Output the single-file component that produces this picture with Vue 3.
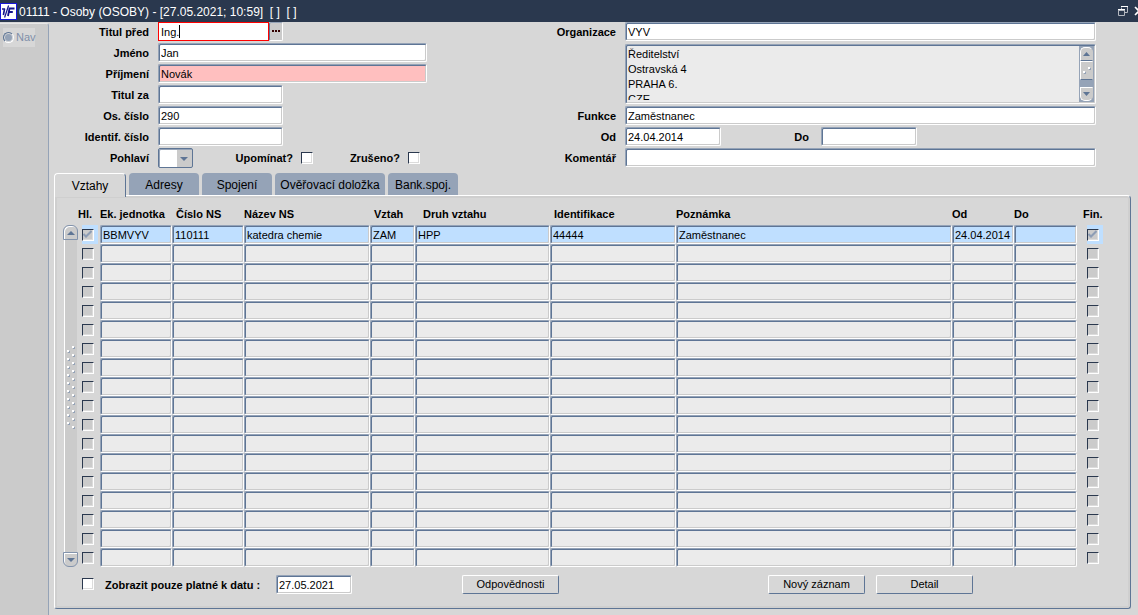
<script setup>
import { ref } from 'vue'

const tabs = ['Vztahy', 'Adresy', 'Spojení', 'Ověřovací doložka', 'Bank.spoj.']
const activeTab = ref(0)

const columns = [
  { key: 'unit', label: 'Ek. jednotka', pad: '' },
  { key: 'nsNumber', label: 'Číslo NS', pad: 'pad-s' },
  { key: 'nsName', label: 'Název NS', pad: '' },
  { key: 'relation', label: 'Vztah', pad: 'pad-s' },
  { key: 'kind', label: 'Druh vztahu', pad: 'pad-m' },
  { key: 'ident', label: 'Identifikace', pad: 'pad-s' },
  { key: 'note', label: 'Poznámka', pad: '' },
  { key: 'from', label: 'Od', pad: '' },
  { key: 'to', label: 'Do', pad: '' },
]

const rows = Array.from({ length: 18 }, () => ({}))
rows[0] = {
  unit: 'BBMVYV',
  nsNumber: '110111',
  nsName: 'katedra chemie',
  relation: 'ZAM',
  kind: 'HPP',
  ident: '44444',
  note: 'Zaměstnanec',
  from: '24.04.2014',
  to: '',
}

const address = 'Ředitelství\nOstravská 4\nPRAHA 6.\nCZE'
const gripDots = Array.from({ length: 21 }, (_, i) => ({ x: i % 2 ? 0 : 5, y: i * 4 }))
</script>

<template>
  <div class="window">
    <header class="titlebar">
      <svg class="logo" width="17" height="17" viewBox="0 0 17 17" aria-hidden="true">
        <rect x="0.5" y="0.5" width="16" height="16" fill="#fff" stroke="#1616d8" />
        <g fill="none" stroke="#14148c">
          <path d="M2 6H5M4.6 5.5L3.4 12" stroke-width="1.6" />
          <path d="M8.6 2.5L4.6 14.5" stroke-width="1.2" />
          <path d="M8.6 5.5H14.5M9.6 5L8 13M8.8 9H12.8" stroke-width="1.8" />
        </g>
      </svg>
      <h1>01111 - Osoby (OSOBY) - [27.05.2021; 10:59]&nbsp; [ ]&nbsp; [ ]</h1>
      <div class="window-buttons">
        <button type="button" aria-label="Obnovit">
          <svg width="10" height="10" viewBox="0 0 10 10">
            <path d="M3.5 3V1.5M9.5 1V6.5H7M0.5 4V9.5H6.5V4" fill="none" stroke="#b4b8c0" />
            <path d="M3 0.5H10M0 3.5H7" fill="none" stroke="#fff" />
            <path d="M0 4.5H7" fill="none" stroke="#b4b8c0" />
          </svg>
        </button>
        <button type="button" aria-label="Zavřít">
          <svg width="10" height="10" viewBox="0 0 10 10">
            <path d="M1 1L9 9M9 1L1 9" stroke="#fff" stroke-width="1.6" />
          </svg>
        </button>
      </div>
    </header>

    <div class="body">
      <aside class="sidebar">
        <label class="nav"><input type="radio" disabled checked />Nav</label>
      </aside>

      <main>
        <form class="form" @submit.prevent>
          <div class="person">
            <div class="row">
              <label for="before">Titul před</label>
              <div class="focused">
                <input id="before" type="text" value="Ing." class="w-title" />
                <span class="caret"></span>
              </div>
              <button type="button" class="lookup" aria-label="Výběr hodnoty">
                <svg width="8" height="2" viewBox="0 0 8 2"><path d="M0 0h2v2H0zM3 0h2v2H3zM6 0h2v2H6z" fill="#300" /></svg>
              </button>
            </div>
            <div class="row">
              <label for="first">Jméno</label>
              <input id="first" type="text" value="Jan" class="field w-long" />
            </div>
            <div class="row">
              <label for="last">Příjmení</label>
              <input id="last" type="text" value="Novák" class="field w-long required" />
            </div>
            <div class="row">
              <label for="after">Titul za</label>
              <input id="after" type="text" class="field w-mid" />
            </div>
            <div class="row">
              <label for="number">Os. číslo</label>
              <input id="number" type="text" value="290" class="field w-mid" />
            </div>
            <div class="row">
              <label for="ident">Identif. číslo</label>
              <input id="ident" type="text" class="field w-mid" />
            </div>
            <div class="row">
              <label for="sex">Pohlaví</label>
              <div class="select">
                <select id="sex"><option value=""></option></select>
                <svg width="8" height="4" viewBox="0 0 8 4"><path d="M0 0h8L4 4z" fill="#5e7595" /></svg>
              </div>
              <label for="remind" class="check-label">Upomínat?</label>
              <input id="remind" type="checkbox" class="check" />
              <label for="cancelled" class="check-label">Zrušeno?</label>
              <input id="cancelled" type="checkbox" class="check" />
            </div>
          </div>

          <div class="organisation">
            <div class="row">
              <label for="org">Organizace</label>
              <input id="org" type="text" value="VYV" class="field grow" />
            </div>
            <div class="row address-row">
              <div class="address">
                <textarea aria-label="Adresa organizace" readonly :value="address"></textarea>
                <div class="mini-scroll">
                  <button type="button" class="mini-up" aria-label="Nahoru">
                    <svg width="7" height="4" viewBox="0 0 7 4"><path d="M0 4L3.5 0L7 4z" fill="#5e7595" /></svg>
                  </button>
                  <div class="mini-thumb">
                    <svg width="8" height="7" viewBox="0 0 8 7">
                      <path d="M5 0h2v2H5zM0 4h2v2H0z" fill="#fff" />
                      <path d="M7 1h1v2H6V2h1zM2 5h1v2H1V6h1z" fill="#95a3b7" />
                    </svg>
                  </div>
                  <button type="button" class="mini-down" aria-label="Dolů">
                    <svg width="7" height="4" viewBox="0 0 7 4"><path d="M0 0h7L3.5 4z" fill="#5e7595" /></svg>
                  </button>
                </div>
              </div>
            </div>
            <div class="row">
              <label for="role">Funkce</label>
              <input id="role" type="text" value="Zaměstnanec" class="field grow" />
            </div>
            <div class="row">
              <label for="from">Od</label>
              <input id="from" type="text" value="24.04.2014" class="field w-date" />
              <label for="to" class="to-label">Do</label>
              <input id="to" type="text" class="field w-date" />
            </div>
            <div class="row">
              <label for="comment">Komentář</label>
              <input id="comment" type="text" class="field grow" />
            </div>
          </div>
        </form>

        <nav class="tabs" role="tablist">
          <button
            v-for="(tab, i) in tabs"
            :key="tab"
            type="button"
            role="tab"
            :class="{ active: i === activeTab, wide: i === 3 }"
            :aria-selected="i === activeTab"
            @click="activeTab = i"
          >{{ tab }}</button>
        </nav>

        <section class="panel">
          <div class="records">
            <div class="scrollbar">
              <button type="button" class="up" aria-label="Předchozí">
                <svg width="8" height="4" viewBox="0 0 8 4"><path d="M0 4L4 0L8 4z" fill="#5e7595" /></svg>
              </button>
              <div class="track">
                <svg width="8" height="84" viewBox="0 0 8 84">
                  <g v-for="dot in gripDots" :key="dot.y">
                    <path :d="`M${dot.x + 1} ${dot.y + 2}h1v-1h1v2h-2z`" fill="#95a3b7" />
                    <rect :x="dot.x" :y="dot.y" width="2" height="2" fill="#fff" />
                  </g>
                </svg>
              </div>
              <button type="button" class="down" aria-label="Další">
                <svg width="8" height="4" viewBox="0 0 8 4"><path d="M0 0h8L4 4z" fill="#5e7595" /></svg>
              </button>
            </div>

            <table>
              <colgroup>
                <col class="c-main" />
                <col v-for="col in columns" :key="col.key" :class="'c-' + col.key" />
                <col class="c-fin" />
              </colgroup>
              <thead>
                <tr>
                  <th class="th-main"><span>Hl.</span></th>
                  <th v-for="col in columns" :key="col.key" :class="col.pad">{{ col.label }}</th>
                  <th class="th-fin">Fin.</th>
                </tr>
              </thead>
              <tbody>
                <tr v-for="(row, i) in rows" :key="i" :class="{ current: i === 0 }">
                  <td>
                    <span class="mark">
                      <input type="checkbox" class="check" disabled :checked="i === 0" aria-label="Hl." />
                      <svg v-if="i === 0" width="9" height="8" viewBox="0 0 9 8"><path d="M0.5 4L3 6.5L8.5 1" fill="none" stroke="#8d9db5" stroke-width="2" /></svg>
                    </span>
                  </td>
                  <td v-for="col in columns" :key="col.key">
                    <input type="text" class="field" :value="row[col.key]" :aria-label="col.label" />
                  </td>
                  <td class="td-fin">
                    <span class="mark">
                      <input type="checkbox" class="check" disabled :checked="i === 0" aria-label="Fin." />
                      <svg v-if="i === 0" width="9" height="8" viewBox="0 0 9 8"><path d="M0.5 4L3 6.5L8.5 1" fill="none" stroke="#8d9db5" stroke-width="2" /></svg>
                    </span>
                  </td>
                </tr>
              </tbody>
            </table>
          </div>

          <footer>
            <input id="valid" type="checkbox" class="check" />
            <label for="valid">Zobrazit pouze platné k datu :</label>
            <input type="text" value="27.05.2021" class="field w-day" aria-label="Datum platnosti" />
            <button type="button" class="action answers">Odpovědnosti</button>
            <div class="right-actions">
              <button type="button" class="action">Nový záznam</button>
              <button type="button" class="action">Detail</button>
            </div>
          </footer>
        </section>
      </main>
    </div>
  </div>
</template>

<style>
body {
  background: #d7d7d7;
}
</style>

<style scoped>
.window {
  display: flex;
  flex-direction: column;
  min-height: 100vh;
  overflow: hidden;
  background: #d7d7d7;
  color: #000;
  font: 11px/15px "Liberation Sans", Arial, sans-serif;
}
.window *,
.window *::before {
  box-sizing: border-box;
}
button,
input,
select,
textarea {
  margin: 0;
  padding: 0;
  border: 0;
  border-radius: 0;
  outline: none;
  font: inherit;
  color: inherit;
}
button {
  display: flex;
  align-items: center;
  justify-content: center;
  background: none;
}
svg {
  display: block;
  flex: none;
}

.titlebar {
  display: flex;
  align-items: center;
  height: 22px;
  background: #2a384e;
  color: #fff;
}
.titlebar h1 {
  margin: 0 0 0 2px;
  padding-top: 2px;
  font-size: 12px;
  font-weight: normal;
  white-space: nowrap;
}
.window-buttons {
  display: flex;
  gap: 6px;
  margin-left: auto;
  margin-right: -6px;
}

.body {
  display: flex;
  flex: 1;
}
.sidebar {
  flex: none;
  width: 49px;
  margin-top: 1px;
  padding: 4px 0 0 3px;
  background: #cbcbcb;
  border-right: 1px solid #95a3b7;
  border-top: 1px solid #e8e8e8;
  border-radius: 0 3px 0 0;
}
.nav {
  display: flex;
  align-items: center;
  gap: 2px;
  width: 32px;
  height: 19px;
  background: #d7d7d7;
  color: #7f90aa;
}
.nav input {
  appearance: none;
  flex: none;
  width: 11px;
  height: 11px;
  border: 1px solid #5e7595;
  border-right-color: #fff;
  border-bottom-color: #fff;
  border-radius: 50%;
  background: #95a3b7;
  box-shadow: inset 0 0 0 1px #d7d7d7;
}

main {
  flex: 1;
  min-width: 0;
}
.form {
  display: flex;
}
.person,
.organisation {
  display: flex;
  flex-direction: column;
  gap: 2px;
}
.person {
  flex: none;
  width: 458px;
}
.organisation {
  flex: 1;
  padding-right: 42px;
}
.row {
  display: flex;
  align-items: center;
  height: 19px;
}
label {
  font-weight: bold;
  white-space: nowrap;
}
.row label {
  padding-top: 2px;
}
.nav {
  font-weight: normal;
}
.row > label:first-child {
  flex: none;
  width: 109px;
  padding-right: 9px;
  text-align: right;
}
.organisation .row > label:first-child {
  width: 118px;
}

.field {
  display: block;
  width: 100%;
  height: 19px;
  padding: 1px 2px 0;
  border: 1px solid;
  border-color: #95a3b7 #fff #fff #95a3b7;
  border-radius: 2px;
  background: #fff;
  box-shadow: inset 1px 1px #5e7595, inset -1px -1px #cbcbcb;
}
.w-long {
  width: 269px;
}
.w-mid {
  width: 125px;
}
.w-date {
  width: 96px;
}
.w-day {
  width: 76px;
}
.grow {
  flex: 1;
}
.required {
  background: #ffbfbf;
}

.focused {
  position: relative;
  height: 19px;
}
.w-title {
  display: block;
  width: 111px;
  height: 19px;
  padding: 1px 2px 0;
  border: 1px solid #f00;
  background: #fff;
}
.caret {
  position: absolute;
  top: 3px;
  left: 21px;
  width: 1px;
  height: 13px;
  background: #000;
}
.lookup {
  width: 14px;
  height: 19px;
  padding-bottom: 2px;
  background: #cbcbcb;
  border: 1px solid;
  border-color: #95a3b7 #fff #fff #5e7595;
  border-radius: 2px;
}

.select {
  position: relative;
  width: 35px;
  height: 20px;
}
.select select {
  appearance: none;
  display: block;
  width: 35px;
  height: 20px;
  border: 1px solid #5e7595;
  border-radius: 2px;
  background: linear-gradient(90deg, #fff 18px, #cbcbcb 18px);
  box-shadow: inset 1px 1px #95a3b7;
}
.select svg {
  position: absolute;
  top: 9px;
  right: 5px;
  pointer-events: none;
}

.check {
  appearance: none;
  display: block;
  flex: none;
  width: 12px;
  height: 12px;
  border: 1px solid;
  border-color: #2a384e #fff #fff #2a384e;
  background: #fff;
  box-shadow: inset -1px -1px #dcdcdc;
}
.check:disabled {
  background: #cbcbcb;
}
.check-label {
  width: 100px;
  margin-right: 8px;
  text-align: right;
}
.check + .check-label {
  width: 87px;
}

.address-row {
  height: 61px;
  padding-left: 118px;
}
.address {
  display: flex;
  width: 100%;
  height: 60px;
  padding: 1px;
  border: 1px solid;
  border-color: #95a3b7 #fff #fff #95a3b7;
  border-radius: 2px;
  background: #ebebeb;
  box-shadow: inset 1px 1px #5e7595, inset -1px -1px #cbcbcb;
}
.address textarea {
  flex: 1;
  padding: 1px;
  margin-bottom: 2px;
  background: none;
  resize: none;
  overflow: hidden;
}
.mini-scroll {
  display: flex;
  flex-direction: column;
  width: 15px;
  padding: 1px;
  background: #95a3b7;
}
.mini-up,
.mini-down,
.mini-thumb {
  display: flex;
  align-items: center;
  justify-content: center;
  width: 13px;
  background: #cbcbcb;
  border: 1px solid;
  border-color: #fff #cbcbcb #5e7595 #fff;
}
.mini-up {
  height: 14px;
  border-radius: 5px 5px 0 0;
}
.mini-thumb {
  height: 19px;
}
.mini-down {
  height: 14px;
  margin-top: auto;
  border-bottom-color: #fff;
  border-radius: 0 0 5px 5px;
}
.organisation .w-date {
  flex: none;
}
.to-label {
  width: 88px;
  margin-right: 12px;
  text-align: right;
}

.tabs {
  display: flex;
  gap: 3px;
  margin: 6px 0 0 5px;
}
.tabs button {
  width: 70px;
  height: 22px;
  padding-top: 2px;
  border-radius: 4px 4px 0 0;
  background: #95a3b7;
  font-size: 12px;
  white-space: nowrap;
}
.tabs .wide {
  width: 110px;
}
.tabs .active {
  position: relative;
  z-index: 1;
  width: 72px;
  height: 24px;
  margin-bottom: -2px;
  border: 1px solid;
  border-color: #fff #5e7595 transparent #fff;
  border-bottom: 0;
  background: #d7d7d7;
}

.panel {
  margin: 0 7px 6px 5px;
  padding: 11px 27px 14px 8px;
  border: 1px solid;
  border-color: #fff #5e7595 #5e7595 #fff;
  border-radius: 0 4px 3px 3px;
  box-shadow: inset 0 0 0 2px #cfcfcf;
}
.records {
  display: flex;
}
.scrollbar {
  display: flex;
  flex-direction: column;
  flex: none;
  width: 15px;
  margin: 18px 4px 0 0;
}
.up,
.down {
  width: 15px;
  height: 15px;
  background: #cbcbcb;
  border: 1px solid #8293ac;
  box-shadow: inset 1px 1px #fff;
}
.up {
  border-radius: 6px 6px 0 0;
}
.down {
  border-radius: 0 0 6px 6px;
}
.track {
  display: flex;
  flex: 1;
  align-items: center;
  padding: 0 0 16px 2px;
  margin: 0 1px;
  background: #cbcbcb;
  border-left: 1px solid #fff;
}

table {
  flex: 1;
  width: 100%;
  min-width: 0;
  table-layout: fixed;
  border-collapse: collapse;
}
.c-main {
  width: 18px;
}
.c-unit,
.c-nsNumber {
  width: 72px;
}
.c-nsName {
  width: 126px;
}
.c-relation {
  width: 45px;
}
.c-kind {
  width: 135px;
}
.c-ident {
  width: 126px;
}
.c-from {
  width: 62px;
}
.c-to {
  width: 63px;
}
.c-fin {
  width: 26px;
}
th {
  height: 18px;
  padding: 0 0 4px;
  line-height: 14px;
  text-align: left;
  white-space: nowrap;
  vertical-align: top;
}
th.pad-s {
  padding-left: 4px;
}
th.pad-m {
  padding-left: 8px;
}
.th-main span {
  display: block;
  margin-left: -4px;
}
th.th-fin {
  padding-left: 6px;
}
td {
  height: 19px;
  padding: 0;
}
td .field {
  background: #ebebeb;
}
.current .field {
  background: #bfdfff;
}
.mark {
  display: flex;
  align-items: center;
  position: relative;
  width: 16px;
  height: 19px;
}
.current .mark {
  background: #bfdfff;
}
.mark svg {
  position: absolute;
  top: 5px;
  left: 1px;
}
.td-fin {
  padding-left: 10px;
}

footer {
  display: flex;
  align-items: center;
  height: 20px;
  margin: 7px 0 0 19px;
}
footer label {
  width: 182px;
  padding: 2px 0 0 11px;
}
.action {
  width: 97px;
  height: 19px;
  border: 1px solid;
  border-color: #fff #5e7595 #5e7595 #fff;
  border-radius: 2px;
}
.answers {
  margin-left: 110px;
}
.right-actions {
  display: flex;
  gap: 11px;
  margin: 0 130px 0 auto;
}
</style>
